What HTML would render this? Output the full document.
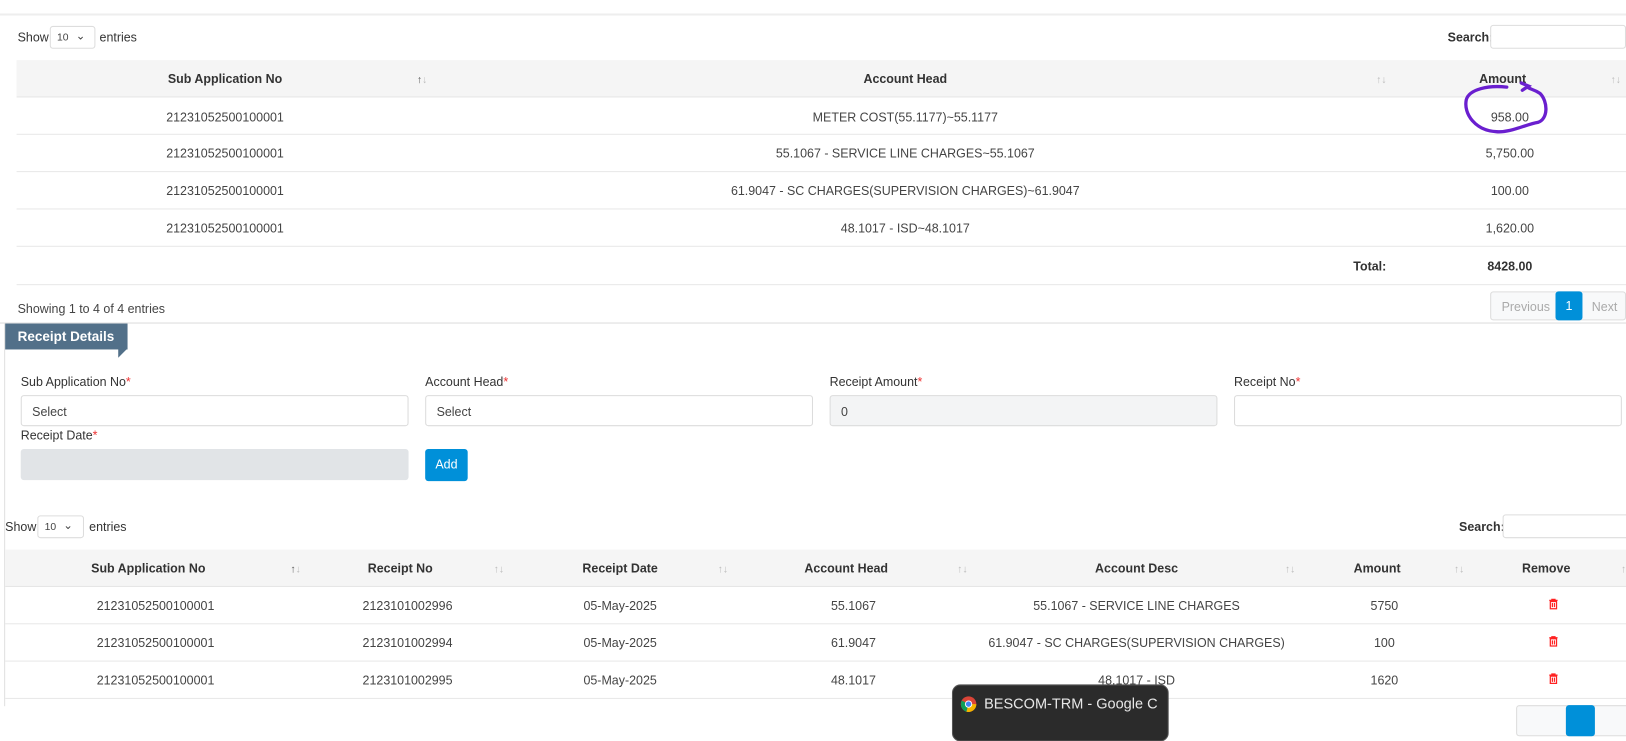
<!DOCTYPE html>
<html><head><meta charset="utf-8"><style>
*{box-sizing:border-box;margin:0;padding:0}
html,body{width:1626px;height:709px;overflow:hidden;background:#fff}
#w{position:absolute;left:0;top:0;width:1568px;height:684px;transform:scale(1.037);transform-origin:0 0;font-family:"Liberation Sans",sans-serif;font-size:12px;color:#444}
.a{position:absolute;white-space:nowrap}
.b{font-weight:bold;color:#333}
.hdr{position:absolute;background:#f5f5f5;border-bottom:1px solid #e6e6e6}
.line{position:absolute;height:1px;background:#e8e8e8}
.c{position:absolute;transform:translateX(-50%);white-space:nowrap}
.s{position:absolute;color:#bbb;font-size:10px}
.s b{color:#555;font-weight:normal}
.box{position:absolute;border:1px solid #ddd;border-radius:3px;background:#fff}
.lab{position:absolute;font-size:12px;color:#333;white-space:nowrap}
.lab i{color:#e33;font-style:normal}
.inp{position:absolute;border:1px solid #dcdcdc;border-radius:3px;height:30px;padding:8px 10px;font-size:12px;color:#444}
</style></head><body><div id="w">
<div class="line" style="left:0;top:13px;width:1568px;background:#eee;height:2px"></div>

<div class="a" style="left:17px;top:29px;color:#333">Show</div>
<div class="box" style="left:48px;top:25px;width:44px;height:22px"><span class="a" style="left:6px;top:5px;font-size:10px">10</span><span class="a" style="left:24px;top:2px;font-size:11px">&#8964;</span></div>
<div class="a" style="left:96px;top:29px;color:#333">entries</div>
<div class="a" style="left:1396px;top:29px;color:#333;font-weight:bold">Search:</div>
<div class="box" style="left:1437px;top:24px;width:131px;height:23px"></div>

<div class="hdr" style="left:16px;top:58px;width:1552px;height:36px"></div>
<div class="c b" style="left:217px;top:69px">Sub Application No</div><div class="s" style="left:402px;top:72px"><b>↑</b>↓</div>
<div class="c b" style="left:873px;top:69px">Account Head</div><div class="s" style="left:1327px;top:72px">↑↓</div>
<div class="c b" style="left:1449px;top:69px">Amount</div><div class="s" style="left:1553px;top:72px">↑↓</div>

<div class="c" style="left:217px;top:106px">21231052500100001</div><div class="c" style="left:873px;top:106px">METER COST(55.1177)~55.1177</div><div class="c" style="left:1456px;top:106px">958.00</div>
<div class="line" style="left:16px;top:129px;width:1552px"></div>
<div class="c" style="left:217px;top:141px">21231052500100001</div><div class="c" style="left:873px;top:141px">55.1067 - SERVICE LINE CHARGES~55.1067</div><div class="c" style="left:1456px;top:141px">5,750.00</div>
<div class="line" style="left:16px;top:165px;width:1552px"></div>
<div class="c" style="left:217px;top:177px">21231052500100001</div><div class="c" style="left:873px;top:177px">61.9047 - SC CHARGES(SUPERVISION CHARGES)~61.9047</div><div class="c" style="left:1456px;top:177px">100.00</div>
<div class="line" style="left:16px;top:201px;width:1552px"></div>
<div class="c" style="left:217px;top:213px">21231052500100001</div><div class="c" style="left:873px;top:213px">48.1017 - ISD~48.1017</div><div class="c" style="left:1456px;top:213px">1,620.00</div>
<div class="line" style="left:16px;top:237px;width:1552px"></div>
<div class="a b" style="left:1305px;top:250px">Total:</div><div class="c b" style="left:1456px;top:250px">8428.00</div>
<div class="line" style="left:16px;top:274px;width:1552px"></div>

<svg class="a" style="left:1405px;top:78px" width="95" height="55"><path d="M48 6 C30 4 12 8 9 18 C6 32 18 48 38 49 C52 50 66 42 78 40 C88 37 88 20 80 12 C74 8 70 8 68 6 M62 2 L69 5 L63 9" fill="none" stroke="#6a1fcf" stroke-width="3.2" stroke-linecap="round"/></svg>

<div class="a" style="left:17px;top:291px">Showing 1 to 4 of 4 entries</div>
<div class="box" style="left:1437px;top:281px;width:131px;height:28px;background:#f8f9fa"></div>
<div class="a" style="left:1448px;top:289px;color:#aaa">Previous</div>
<div class="a" style="left:1500px;top:281px;width:26px;height:28px;background:#0090d9;border-radius:3px;color:#fff;text-align:center;line-height:28px">1</div>
<div class="a" style="left:1535px;top:289px;color:#aaa">Next</div>
<div class="line" style="left:0;top:311px;width:1568px;background:#ddd"></div>
<div class="line" style="left:4px;top:311px;width:1px;height:370px;background:#e0e0e0"></div>

<div class="a" style="left:5px;top:312px;width:118px;height:25px;background:#527089;color:#fff;font-weight:bold;font-size:13px;padding:5px 0 0 12px">Receipt Details</div>
<svg class="a" style="left:113px;top:336px" width="11" height="10"><polygon points="1,0 10,0 1,9" fill="#527089"/></svg>

<div class="lab" style="left:20px;top:361px">Sub Application No<i>*</i></div>
<div class="lab" style="left:410px;top:361px">Account Head<i>*</i></div>
<div class="lab" style="left:800px;top:361px">Receipt Amount<i>*</i></div>
<div class="lab" style="left:1190px;top:361px">Receipt No<i>*</i></div>
<div class="inp" style="left:20px;top:381px;width:374px">Select</div>
<div class="inp" style="left:410px;top:381px;width:374px">Select</div>
<div class="inp" style="left:800px;top:381px;width:374px;background:#f3f4f5">0</div>
<div class="inp" style="left:1190px;top:381px;width:374px"></div>
<div class="lab" style="left:20px;top:413px">Receipt Date<i>*</i></div>
<div class="inp" style="left:20px;top:433px;width:374px;background:#e1e4e7;border-color:#e1e4e7"></div>
<div class="a" style="left:410px;top:433px;width:41px;height:31px;background:#0090d9;border-radius:3px;color:#fff;text-align:center;line-height:31px">Add</div>

<div class="a" style="left:5px;top:501px;color:#333">Show</div>
<div class="box" style="left:36px;top:497px;width:45px;height:22px"><span class="a" style="left:6px;top:5px;font-size:10px">10</span><span class="a" style="left:24px;top:2px;font-size:11px">&#8964;</span></div>
<div class="a" style="left:86px;top:501px;color:#333">entries</div>
<div class="a" style="left:1407px;top:501px;color:#333;font-weight:bold">Search:</div>
<div class="box" style="left:1449px;top:496px;width:180px;height:23px"></div>

<div class="hdr" style="left:5px;top:530px;width:1563px;height:36px"></div>
<div class="c b" style="left:143px;top:541px">Sub Application No</div><div class="s" style="left:280px;top:544px"><b>↑</b>↓</div>
<div class="c b" style="left:386px;top:541px">Receipt No</div><div class="s" style="left:476px;top:544px">↑↓</div>
<div class="c b" style="left:598px;top:541px">Receipt Date</div><div class="s" style="left:692px;top:544px">↑↓</div>
<div class="c b" style="left:816px;top:541px">Account Head</div><div class="s" style="left:923px;top:544px">↑↓</div>
<div class="c b" style="left:1096px;top:541px">Account Desc</div><div class="s" style="left:1239px;top:544px">↑↓</div>
<div class="c b" style="left:1328px;top:541px">Amount</div><div class="s" style="left:1402px;top:544px">↑↓</div>
<div class="c b" style="left:1491px;top:541px">Remove</div><div class="s" style="left:1563px;top:544px">↑</div>

<div class="c" style="left:150px;top:577px">21231052500100001</div><div class="c" style="left:393px;top:577px">2123101002996</div><div class="c" style="left:598px;top:577px">05-May-2025</div><div class="c" style="left:823px;top:577px">55.1067</div><div class="c" style="left:1096px;top:577px">55.1067 - SERVICE LINE CHARGES</div><div class="c" style="left:1335px;top:577px">5750</div>
<div class="line" style="left:5px;top:601px;width:1563px"></div>
<div class="c" style="left:150px;top:613px">21231052500100001</div><div class="c" style="left:393px;top:613px">2123101002994</div><div class="c" style="left:598px;top:613px">05-May-2025</div><div class="c" style="left:823px;top:613px">61.9047</div><div class="c" style="left:1096px;top:613px">61.9047 - SC CHARGES(SUPERVISION CHARGES)</div><div class="c" style="left:1335px;top:613px">100</div>
<div class="line" style="left:5px;top:637px;width:1563px"></div>
<div class="c" style="left:150px;top:649px">21231052500100001</div><div class="c" style="left:393px;top:649px">2123101002995</div><div class="c" style="left:598px;top:649px">05-May-2025</div><div class="c" style="left:823px;top:649px">48.1017</div><div class="c" style="left:1096px;top:649px">48.1017 - ISD</div><div class="c" style="left:1335px;top:649px">1620</div>
<div class="line" style="left:5px;top:673px;width:1563px"></div>

<svg class="a" style="left:1493px;top:577px" width="10" height="11"><path d="M1 2h8M3.5 2V1h3v1M2 3h6v7H2z M4 4.5v4M6 4.5v4" fill="none" stroke="#f22" stroke-width="1.2"/></svg>
<svg class="a" style="left:1493px;top:613px" width="10" height="11"><path d="M1 2h8M3.5 2V1h3v1M2 3h6v7H2z M4 4.5v4M6 4.5v4" fill="none" stroke="#f22" stroke-width="1.2"/></svg>
<svg class="a" style="left:1493px;top:649px" width="10" height="11"><path d="M1 2h8M3.5 2V1h3v1M2 3h6v7H2z M4 4.5v4M6 4.5v4" fill="none" stroke="#f22" stroke-width="1.2"/></svg>

<div class="box" style="left:1462px;top:680px;width:110px;height:30px;background:#f8f9fa"></div>
<div class="a" style="left:1510px;top:680px;width:28px;height:30px;background:#0090d9;border-radius:3px"></div>

<div class="a" style="left:918px;top:660px;width:209px;height:55px;background:#2b2b2b;border-radius:8px;border:1px solid #555"></div>
<svg class="a" style="left:926px;top:671px" width="16" height="16"><circle cx="8" cy="8" r="7.5" fill="#db4437"/><path d="M8 8 L1.5 4.5 A7.5 7.5 0 0 0 6 15.3Z" fill="#0f9d58"/><path d="M8 8 L6 15.3 A7.5 7.5 0 0 0 15.5 8Z" fill="#f4b400"/><circle cx="8" cy="8" r="3.5" fill="#fff"/><circle cx="8" cy="8" r="2.6" fill="#4285f4"/></svg>
<div class="a" style="left:949px;top:670px;color:#e8e8e8;font-size:14px">BESCOM-TRM - Google C</div>
</div></body></html>
